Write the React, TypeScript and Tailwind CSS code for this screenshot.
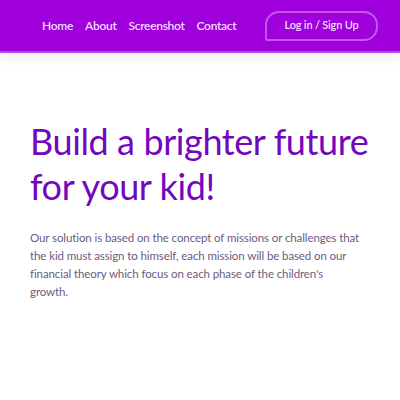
export default function App() {
  return (
    <div className="min-h-[400px] bg-white" style={{ fontFamily: "Lato, 'Open Sans', sans-serif" }}>
      <header className="h-[53px] bg-[#a000dc] border-b-2 border-[#b94ae6] flex items-center shadow-[0_4px_14px_rgba(0,0,0,0.07)] relative">
        <nav className="flex items-center gap-[12px] ml-[42px] text-[12px] font-semibold text-[#f2deff] tracking-[-0.3px]">
          <span>Home</span>
          <span>About</span>
          <span>Screenshot</span>
          <span>Contact</span>
        </nav>
        <button className="ml-auto mr-[22px] w-[113px] h-[30px] rounded-tl-[14px] rounded-tr-[14px] rounded-br-[14px] rounded-bl-[2px] border-2 border-[#bb5aeb] text-[11px] font-semibold text-[#f2deff] tracking-[-0.2px]">
          Log in / Sign Up
        </button>
      </header>
      <main className="px-[30px] pt-[66px]">
        <h1 className="text-[36px] leading-[45px] text-[#7207bd] font-normal tracking-[-0.4px] whitespace-nowrap">
          Build a brighter future
          <br />
          for your kid!
        </h1>
        <p className="mt-[20px] text-[11.5px] leading-[18px] text-[#6d5b82] max-w-[331px] tracking-[-0.1px]">
          Our solution is based on the concept of missions or challenges that the kid must assign to himself, each mission will be based on our financial theory which focus on each phase of the children's growth.
        </p>
      </main>
    </div>
  );
}
